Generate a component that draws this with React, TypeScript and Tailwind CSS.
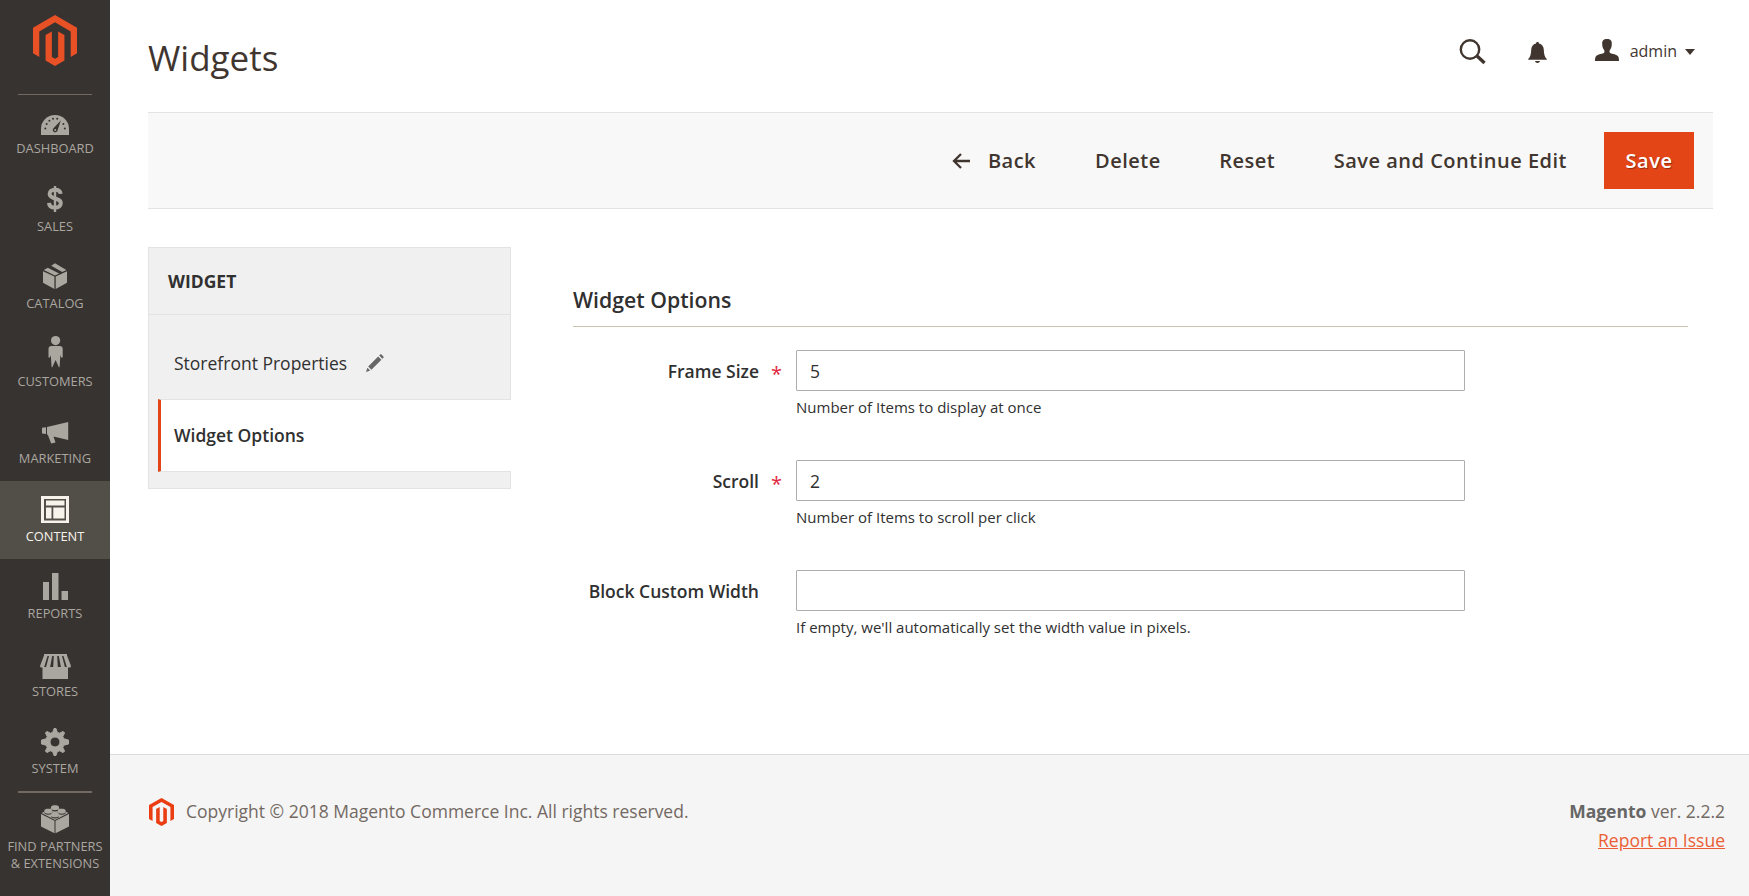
import React from "react";

const logoPath =
  "M12 24l-4.455-2.572v-12l2.97-1.715v12.001l1.485.902 1.485-.902V7.713l2.971 1.715v12L12 24zM22.391 6v12l-2.969 1.714V7.713L12 3.43 4.574 7.713v12.001L1.609 18V6L12 0l10.391 6z";

function Logo({ className }: { className: string }) {
  return (
    <svg viewBox="1.609 0 20.782 24" preserveAspectRatio="none" className={className} fill="currentColor">
      <path d={logoPath} />
    </svg>
  );
}

type Item = { label: string; box: string; icon: React.ReactNode };

const cut = "#373330";

const items: Item[] = [
  {
    label: "DASHBOARD",
    box: "h-[78px]",
    icon: (
      <>
        <path d="M2 34V28a14 14 0 0 1 28 0v6z" />
        <g fill={cut}>
          <circle cx="6.3" cy="27.6" r="1" />
          <circle cx="7.7" cy="23" r="1" />
          <circle cx="10.4" cy="19.8" r="1" />
          <circle cx="14" cy="17.8" r="1" />
          <circle cx="18.2" cy="17.8" r="1" />
          <circle cx="24.4" cy="23" r="1" />
          <circle cx="25.8" cy="27.6" r="1" />
          <path d="M21.8 19.6l-3.3 9.8a2.4 2.4 0 1 1-3.8-2.4z" />
        </g>
        <circle cx="16.2" cy="29" r="1" />
      </>
    ),
  },
  {
    label: "SALES",
    box: "h-[77px]",
    icon: (
      <g fill="none" stroke="currentColor">
        <path d="M21.600 14.900C21.300 12.200 19.200 10.800 16 10.800c-3.300 0-5.400 1.600-5.400 4.200 0 5.900 11.200 3 11.200 9 0 2.800-2.300 4.600-5.800 4.600-3.600 0-5.800-1.600-6-4.800" strokeWidth="4" />
        <path d="M16 7v26" strokeWidth="2.400" />
      </g>
    ),
  },
  {
    label: "CATALOG",
    box: "h-[78px]",
    icon: (
      <>
        <path d="M4 15.200l11.400 5.300V33L4 26.800z M16.700 20.500L28 15.200v11.600L16.700 33z" />
        <path d="M4.800 13.900l4-2.200 11.300 5.700-4.100 2z M12.200 9.700L16 7.200l11.400 6.700-4.200 2z" />
      </>
    ),
  },
  {
    label: "CUSTOMERS",
    box: "h-[77px]",
    icon: (
      <>
        <circle cx="16.600" cy="6.600" r="4.600" />
        <path d="M12.500 12h8.200a3 3 0 0 1 3 3v8.500h-1.500l-.8-2.500-.800 12.300h-.700l-3.300-7.300-3.300 7.300h-.7L11.800 21l-.8 2.500H9.500V15a3 3 0 0 1 3-3z" />
      </>
    ),
  },
  {
    label: "MARKETING",
    box: "h-[78px]",
    icon: (
      <path d="M3 16.800l4-.600v6.800l-4-.600z M8 15.900L29.200 11v18L14.500 25.400l2 6-4.300 1L9 24.200 8 23.300z" />
    ),
  },
  {
    label: "CONTENT",
    box: "h-[78px] -mb-px bg-[#524f49] text-[#f7f3eb]",
    icon: (
      <path fillRule="evenodd" d="M2 7h28v27H2z M5 10v21.500h22V10z M7 11.500h18.500v5H7z M7 18.500h5.500v11H7z M14.300 18.500h11.200v11H14.300z" />
    ),
  },
  {
    label: "REPORTS",
    box: "h-[78px]",
    icon: <path d="M4 16h6v18H4z M13 7h6.500v27H13z M22.500 25H29v9h-6.500z" />,
  },
  {
    label: "STORES",
    box: "h-[77px]",
    icon: (
      <>
        <path d="M5 10h23v2H5z M3.500 23H29v12H3.500z" />
        <path d="M4.800 12h3.700L5 23.500H1.600L1 22z M10 12h3.200L11 23.500H7z M14.800 12h3.400l.6 11.500h-4.600z M19.800 12H23l3 11.500h-4z M24.500 12h3.700L32 22l-.600 1.500h-3.400z" />
      </>
    ),
  },
  {
    label: "SYSTEM",
    box: "h-[78px]",
    icon: (
      <path
        fillRule="evenodd"
        stroke="currentColor"
        strokeWidth="1"
        strokeLinejoin="round"
        d="M13.800 11.200L15 7.500h2l1.200 3.700 2.400 1 3.500-1.800 1.500 1.500-1.800 3.500 1 2.400 4.700 1.200v4l-4.700 1.200-1 2.400 1.800 3.500-1.500 1.500-3.500-1.800-2.400 1L17 34.500h-2l-1.200-3.700-2.400-1-3.500 1.800-1.500-1.500 1.800-3.500-1-2.400L2.500 23v-4l4.700-1.200 1-2.400-1.800-3.500 1.500-1.500 3.500 1.800z M16 16a5 5 0 1 0 0 10 5 5 0 0 0 0-10z"
      />
    ),
  },
  {
    label: "FIND PARTNERS\n& EXTENSIONS",
    box: "h-[105px]",
    icon: (
      <>
        <path d="M2 14.900l13.500 6.900V34.300L2 27.500z M16.500 21.800L30 14.900v12.600l-13.500 6.800z" />
        <path d="M2.600 14L16 7.500 29.400 14 16 20.900z" />
        <g fill={cut}>
          <path d="M12 8.500v2c0 2.600 8 2.600 8 0v-2z" />
          <path d="M5.300 11.800v2c0 2.600 8 2.600 8 0v-2z" />
          <path d="M18.700 11.800v2c0 2.600 8 2.600 8 0v-2z" />
          <path d="M12 15.600v2c0 2.600 8 2.600 8 0v-2z" />
        </g>
        <path d="M12 8v1.500c0 2.200 8 2.200 8 0V8c0-2.400-8-2.400-8 0z M5.300 11.500V13c0 2.200 8 2.200 8 0v-1.500c0-2.400-8-2.400-8 0z M18.700 11.500V13c0 2.200 8 2.200 8 0v-1.500c0-2.400-8-2.400-8 0z M12 15.200v1.500c0 2.200 8 2.200 8 0v-1.500c0-2.400-8-2.400-8 0z" />
      </>
    ),
  },
];

function Sidebar() {
  return (
    <nav className="flex w-[110px] shrink-0 flex-col items-center bg-[#373330] text-[#aaa6a0]">
      <div className="flex h-[93px] w-full flex-col items-center pt-[15px]">
        <Logo className="h-[51px] w-11 text-[#e85125]" />
      </div>
      <div className="-mb-[2px] mt-px h-px w-[74px] shrink-0 bg-[#736963]" />
      {items.map((item, i) => (
        <React.Fragment key={item.label}>
          {i === 9 && <div className="-mb-[2px] h-[2px] w-[74px] shrink-0 bg-[#736963]" />}
          <a className={"flex w-full shrink-0 flex-col items-center pt-2 " + item.box}>
            <svg viewBox="0 0 32 36" className="h-9 w-8 shrink-0" fill="currentColor">
              {item.icon}
            </svg>
            <span className="mt-[3px] whitespace-pre text-center text-[12.850px] leading-[17px]">{item.label}</span>
          </a>
        </React.Fragment>
      ))}
    </nav>
  );
}

function Header() {
  return (
    <header className="flex h-28 shrink-0 justify-between pl-[38px] pr-[54px] text-[#41362f]">
      <h1 className="pt-[34px] text-[35px] leading-[48px]">Widgets</h1>
      <div className="flex pt-[38px]">
        <svg viewBox="0 0 27 27" className="mr-[42px] size-[27px]" fill="none" stroke="currentColor">
          <circle cx="11" cy="11.500" r="9.200" strokeWidth="2.400" />
          <path d="M17.500 17.500l8 7.500" strokeWidth="3.400" />
        </svg>
        <svg viewBox="0 0 19 22" className="mr-12 mt-1 h-[22px] w-[19px]" fill="currentColor">
          <path d="M9.500 0c1 0 1.500.6 1.500 1.500 3 .8 4.700 3 4.800 6.200.1 4.500.900 7.300 3 9.300H.200c2.100-2 2.900-4.800 3-9.300C3.300 4.500 5 2.300 8 1.500 8 .6 8.500 0 9.500 0z M.200 17.300h18.600v.7H.200z M7 19h5c-.3 1.300-1.200 2-2.500 2S7.300 20.300 7 19z" />
        </svg>
        <svg viewBox="0 0 24 22" className="mt-px h-[22px] w-6" fill="currentColor">
          <path d="M12 0c3.500 0 5 1.800 4.800 5-.1 3.400-.9 4.700-2 6.300-.5.700-.4 2.300.4 2.700 2.400 1.200 6.600 1.300 8 3.500.5.900.8 2.500.8 4.500H0c0-2 .3-3.600.8-4.500 1.400-2.200 5.600-2.300 8-3.500.8-.4.900-2 .4-2.700-1.100-1.600-1.900-2.900-2-6.300C7 1.800 8.500 0 12 0z" />
        </svg>
        <span className="ml-[11px] mt-[2px] text-[16px] leading-[22px]">admin</span>
        <svg viewBox="0 0 10 6" className="ml-2 mt-[11px] h-1.5 w-2.5" fill="currentColor">
          <path d="M0 0h10L5 6z" />
        </svg>
      </div>
    </header>
  );
}

function Toolbar() {
  return (
    <div className="ml-[38px] mr-9 flex h-[97px] shrink-0 items-center justify-end border-y border-[#e3e3e3] bg-[#f8f8f8] pr-[19px] text-[20px] font-semibold leading-[27px] tracking-[0.5px] text-[#41362f]">
      <button className="flex items-center">
        <svg viewBox="0 0 18 16" className="mr-[18px] h-4 w-[18px]" fill="none" stroke="currentColor" strokeWidth="2.300">
          <path d="M9 1L2 8l7 7M1.500 8H18" />
        </svg>
        Back
      </button>
      <button className="ml-[59px]">Delete</button>
      <button className="ml-[58.500px]">Reset</button>
      <button className="ml-[58.500px]">Save and Continue Edit</button>
      <button className="ml-[37px] h-[57px] w-[90px] bg-[#e34517] text-white [text-shadow:1px_1px_1px_rgba(0,0,0,0.35)]">
        Save
      </button>
    </div>
  );
}

function TabPanel() {
  return (
    <aside className="h-[242px] w-[363px] shrink-0 border border-[#e3e3e3] bg-[#f0f0f0] text-[17.500px] text-[#303030]">
      <div className="flex h-[67px] items-center border-b border-[#e3e3e3] pl-[19px] font-bold">WIDGET</div>
      <div className="flex h-[84px] items-center pl-[25px] pt-3">
        Storefront Properties
        <svg viewBox="0 0 18 18" className="ml-[19px] size-[18px]" fill="#666">
          <path d="M0 18l1.400-4.200 2.800 2.800z M2.200 12.600L12.200 2.600l3.200 3.200-10 10z M13.200 1.600l1-1c.4-.4.900-.4 1.300 0l1.900 1.900c.4.400.4.900 0 1.300l-1 1z" />
        </svg>
      </div>
      <div className="-mr-px ml-[9px] flex h-[73px] items-center border-y border-l-[3px] border-y-[#e3e3e3] border-l-[#e34517] bg-white pl-[13px] font-semibold">
        Widget Options
      </div>
    </aside>
  );
}

const fields = [
  { label: "Frame Size", required: true, value: "5", note: "Number of Items to display at once" },
  { label: "Scroll", required: true, value: "2", note: "Number of Items to scroll per click" },
  { label: "Block Custom Width", required: false, value: "", note: "If empty, we'll automatically set the width value in pixels." },
];

function Form() {
  return (
    <section className="ml-[62px] w-[1115px] pt-[35px] text-[#303030]">
      <h2 className="h-[45px] border-b border-[#cac3b4] text-[21.250px] font-semibold leading-[36px]">Widget Options</h2>
      <div className="pt-[23px]">
        {fields.map((f) => (
          <div key={f.label} className="flex h-[110px]">
            <label className="w-[186px] shrink-0 text-right text-[17.500px] font-semibold leading-[43px]">{f.label}</label>
            <span className="w-[37px] shrink-0 pl-3 pt-[2px] text-[20px] leading-[43px] text-[#e22640]">
              {f.required ? "*" : ""}
            </span>
            <div>
              <input
                defaultValue={f.value}
                className="block h-[41px] w-[669px] rounded-[1px] border border-[#adadad] bg-white px-[13px] text-[17.500px] leading-[24px] outline-none"
              />
              <p className="mt-[5px] text-[15px] leading-[22px]">{f.note}</p>
            </div>
          </div>
        ))}
      </div>
    </section>
  );
}

function Footer() {
  return (
    <footer className="flex h-[142px] shrink-0 justify-between border-t border-[#dcdcdc] bg-[#f5f5f5] pl-[38px] pr-6 text-[17.500px] leading-[29px] text-[#736963]">
      <div className="flex pt-[42px]">
        <Logo className="ml-px mr-3 mt-px h-7 w-[25px] text-[#eb3d12]" />
        Copyright © 2018 Magento Commerce Inc. All rights reserved.
      </div>
      <div className="pt-[42px] text-right">
        <p>
          <strong className="font-bold text-[#666]">Magento</strong> ver. 2.2.2
        </p>
        <a className="text-[#eb5e35] underline">Report an Issue</a>
      </div>
    </footer>
  );
}

export default function App() {
  return (
    <div className="flex h-[896px] w-[1749px] overflow-hidden bg-white font-['Open_Sans','Noto_Sans',sans-serif]">
      <Sidebar />
      <div className="flex min-w-0 flex-1 flex-col">
        <Header />
        <Toolbar />
        <main className="flex flex-1 pl-[38px] pt-[38px]">
          <TabPanel />
          <Form />
        </main>
        <Footer />
      </div>
    </div>
  );
}
